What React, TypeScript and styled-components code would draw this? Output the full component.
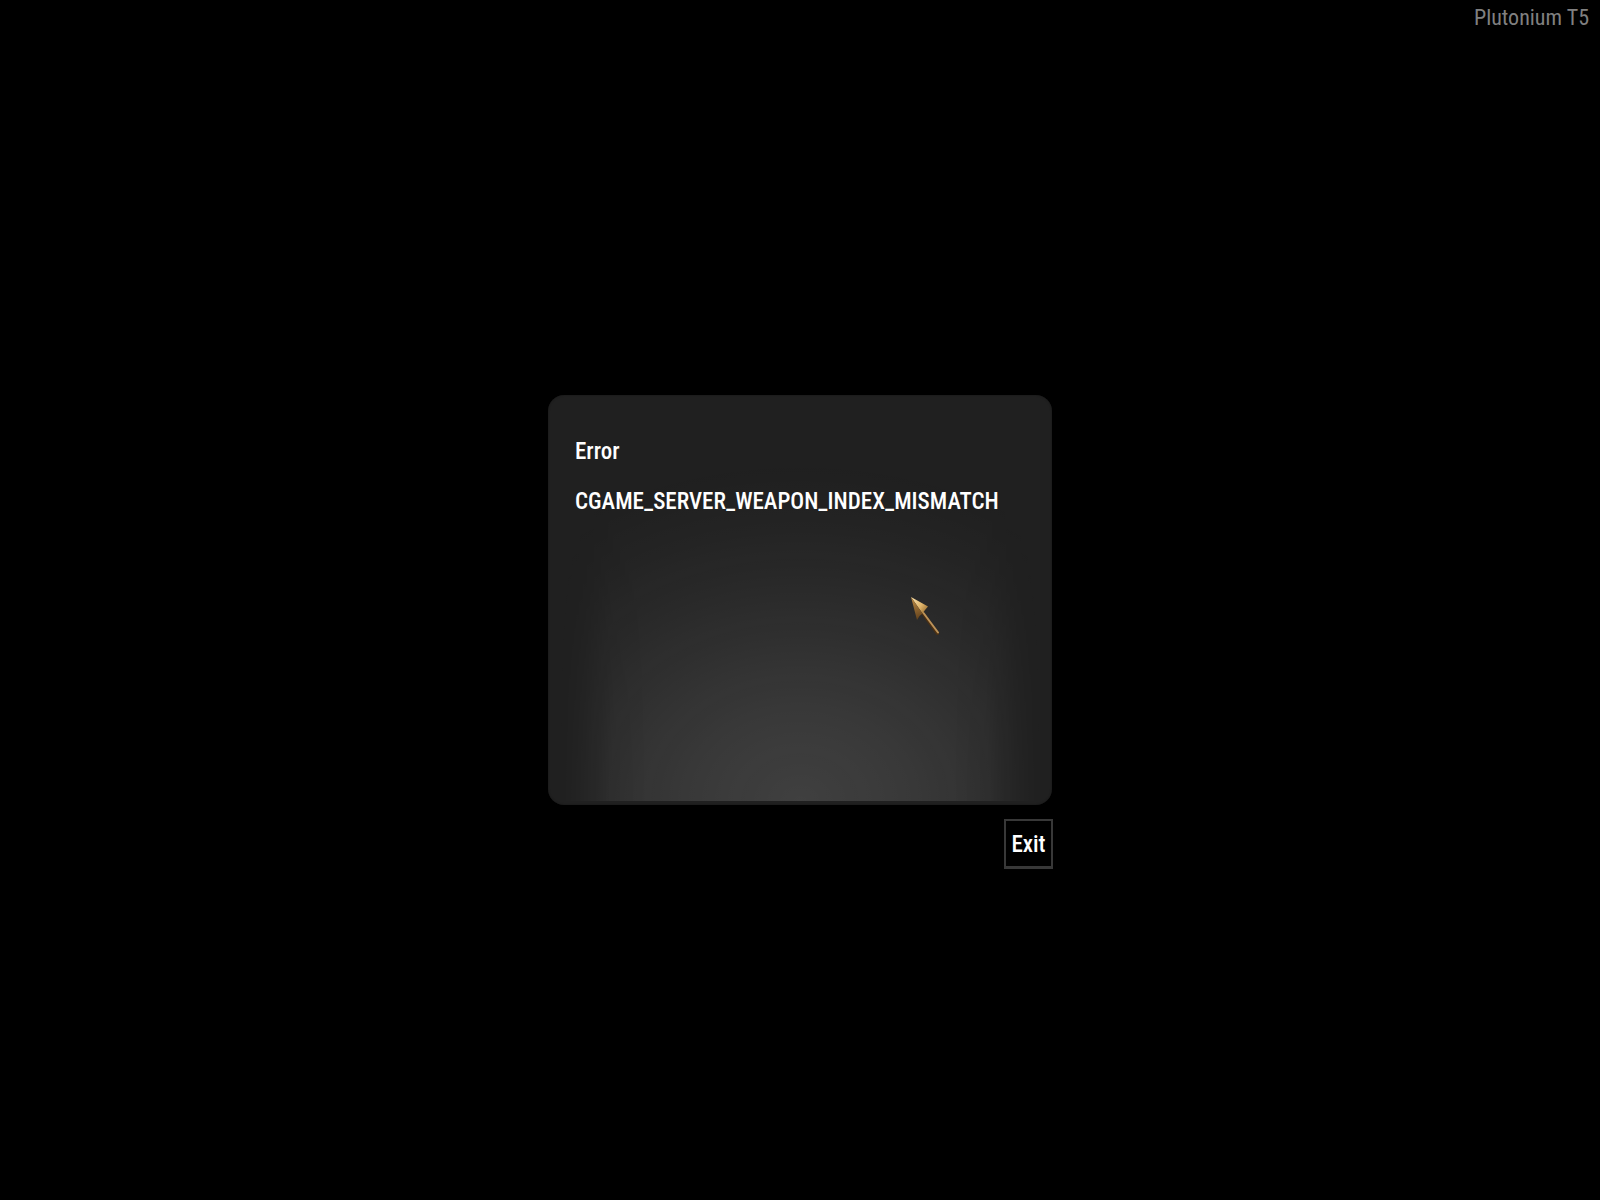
import React from "react";
import styled, { createGlobalStyle } from "styled-components";

const GlobalStyle = createGlobalStyle`
  *, *::before, *::after { box-sizing: border-box; }
  body {
    margin: 0;
    background: #000;
    color: #fff;
    font-family: "Roboto Condensed", "Liberation Sans Narrow", "Arial Narrow", "Liberation Sans", sans-serif;
  }
`;

const Screen = styled.div`
  display: grid;
  grid-template-rows: 1fr auto 1fr;
  min-height: 100vh;
  overflow: hidden;
`;

const Header = styled.header`
  display: flex;
  justify-content: flex-end;
  align-items: flex-start;
  padding: 4px 11px;
`;

const Version = styled.span`
  color: #808080;
  font-size: 22px;
  line-height: 28px;
`;

const Dialog = styled.main`
  position: relative;
  isolation: isolate;
  width: 100%;
  max-width: 504px;
  min-height: 410px;
  margin: 0 auto;
  padding: 37px 27px;
  border-radius: 16px;
  background: #202020;
  box-shadow: inset 0 0 2px #141414;

  &::before {
    content: "";
    position: absolute;
    z-index: -1;
    inset: 0 0 4px;
    border-radius: 16px 16px 0 0;
    background: radial-gradient(
      ellipse 420px 340px at 50% 100%,
      rgba(255, 255, 255, 0.145),
      rgba(255, 255, 255, 0.11) 28%,
      rgba(255, 255, 255, 0.052) 60%,
      rgba(255, 255, 255, 0.018) 80%,
      rgba(255, 255, 255, 0) 100%
    );
    mask-image: linear-gradient(90deg, transparent 2%, rgba(0, 0, 0, 0.3) 7%, rgba(0, 0, 0, 0.85) 13%, #000 20%, #000 80%, rgba(0, 0, 0, 0.85) 87%, rgba(0, 0, 0, 0.3) 93%, transparent 98%);
  }
`;

const Title = styled.h1`
  margin: 0 0 10px;
  font-size: 23px;
  font-weight: 500;
  line-height: 40px;
`;

const Message = styled.p`
  margin: 0;
  font-size: 23px;
  font-weight: 500;
  line-height: 40px;
  overflow-wrap: anywhere;
`;

const Actions = styled.footer`
  display: flex;
  justify-content: flex-end;
  align-items: flex-start;
  width: 100%;
  max-width: 506px;
  margin: 0 auto;
  padding-top: 14px;
`;

const Button = styled.button`
  min-width: 49px;
  height: 50px;
  padding: 2px 4px 0;
  border: 2px solid #383838;
  border-bottom-width: 3px;
  background: #000;
  color: #fff;
  font-family: inherit;
  font-size: 23px;
  font-weight: 500;
  line-height: 40px;
`;

const Pointer = styled.svg`
  position: absolute;
  left: 362px;
  top: 201px;
  width: 32px;
  height: 42px;
  pointer-events: none;
`;

const Cursor = () => (
  <Pointer viewBox="0 0 32 42" aria-hidden="true">
    <defs>
      <linearGradient id="lit" x1="1" y1="2" x2="18" y2="14" gradientUnits="userSpaceOnUse">
        <stop offset="0" stopColor="#fae2ad" />
        <stop offset="0.6" stopColor="#dfb46b" />
        <stop offset="1" stopColor="#9b6f31" />
      </linearGradient>
      <linearGradient id="shade" x1="1" y1="2" x2="8" y2="24" gradientUnits="userSpaceOnUse">
        <stop offset="0" stopColor="#bd8b45" />
        <stop offset="1" stopColor="#60401b" />
      </linearGradient>
    </defs>
    <path d="M13 17.5 27.5 37.5" stroke="#4b3013" strokeWidth="3" strokeLinecap="round" />
    <path d="M13.5 17 28 36.5" stroke="#bb9259" strokeWidth="2" strokeLinecap="round" />
    <path d="M1 1 18 10.5 15 14 12.5 17.5Z" fill="url(#lit)" />
    <path d="M1 1 12.5 17.5 9.5 20 7 24Z" fill="url(#shade)" />
  </Pointer>
);

export default function App() {
  return (
    <>
      <GlobalStyle />
      <Screen>
        <Header>
          <Version>Plutonium T5</Version>
        </Header>
        <Dialog role="alertdialog" aria-labelledby="title" aria-describedby="message">
          <Title id="title">Error</Title>
          <Message id="message">CGAME_SERVER_WEAPON_INDEX_MISMATCH</Message>
          <Cursor />
        </Dialog>
        <Actions>
          <Button type="button">Exit</Button>
        </Actions>
      </Screen>
    </>
  );
}
